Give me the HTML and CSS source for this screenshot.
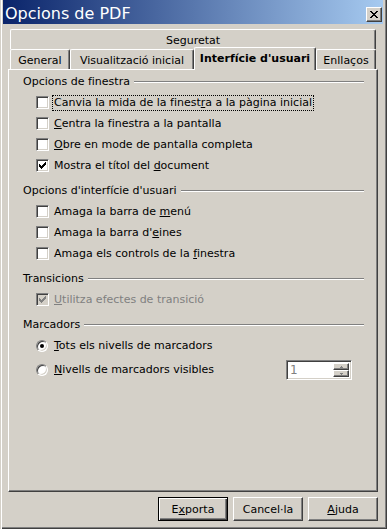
FILE: index.html
```html
<!DOCTYPE html>
<html lang="ca">
<head>
    <meta charset="UTF-8">
    <title>Opcions de PDF</title>
    <link rel="stylesheet" href="styles.css">
</head>
<body>
    <div class="window">
        <div class="titlebar">
            <span class="title">Opcions de PDF</span>
            <span class="close-btn">
                <svg width="8" height="7" viewBox="0 0 8 7" shape-rendering="crispEdges">
                    <path d="M0 0h2v1h-2z M6 0h2v1h-2z M1 1h2v1h-2z M5 1h2v1h-2z M2 2h4v1h-4z M3 3h2v1h-2z M2 4h4v1h-4z M1 5h2v1h-2z M5 5h2v1h-2z M0 6h2v1h-2z M6 6h2v1h-2z" fill="#000"/>
                </svg>
            </span>
        </div>

        <div class="dialog">
            <div class="tabs">
                <div class="tab-row">
                    <div class="tab tab-security">Seguretat</div>
                </div>
                <div class="tab-row">
                    <div class="tab tab-general">General</div>
                    <div class="tab tab-view">Visualització inicial</div>
                    <div class="tab tab-ui active">Interfície d'usuari</div>
                    <div class="tab tab-links">Enllaços</div>
                </div>
            </div>

            <div class="panel">
                <div class="group">
                    <div class="group-title"><span>Opcions de finestra</span></div>
                    <div class="rows">
                        <div class="option"><span class="check"></span><span class="label focused">Canvia la mida de la finest<u>r</u>a a la pàgina inicial</span></div>
                        <div class="option"><span class="check"></span><span class="label"><u>C</u>entra la finestra a la pantalla</span></div>
                        <div class="option"><span class="check"></span><span class="label"><u>O</u>bre en mode de pantalla completa</span></div>
                        <div class="option"><span class="check checked"><svg width="7" height="7" viewBox="0 0 7 7" shape-rendering="crispEdges"><path d="M0 2h1v3h-1z M1 3h1v3h-1z M2 4h1v3h-1z M3 3h1v3h-1z M4 2h1v3h-1z M5 1h1v3h-1z M6 0h1v3h-1z" fill="#000"/></svg></span><span class="label">Mostra el títol del <u>d</u>ocument</span></div>
                    </div>
                </div>

                <div class="group">
                    <div class="group-title"><span>Opcions d'interfície d'usuari</span></div>
                    <div class="rows">
                        <div class="option"><span class="check"></span><span class="label">Amaga la barra de <u>m</u>enú</span></div>
                        <div class="option"><span class="check"></span><span class="label">Amaga la barra d'<u>e</u>ines</span></div>
                        <div class="option"><span class="check"></span><span class="label">Amaga els controls de la <u>f</u>inestra</span></div>
                    </div>
                </div>

                <div class="group">
                    <div class="group-title"><span>Transicions</span></div>
                    <div class="rows">
                        <div class="option disabled"><span class="check checked"><svg width="7" height="7" viewBox="0 0 7 7" shape-rendering="crispEdges"><path d="M0 2h1v3h-1z M1 3h1v3h-1z M2 4h1v3h-1z M3 3h1v3h-1z M4 2h1v3h-1z M5 1h1v3h-1z M6 0h1v3h-1z" fill="#808080"/></svg></span><span class="label"><u>U</u>tilitza efectes de transició</span></div>
                    </div>
                </div>

                <div class="group">
                    <div class="group-title"><span>Marcadors</span></div>
                    <div class="rows">
                        <div class="option"><span class="radio selected"></span><span class="label"><u>T</u>ots els nivells de marcadors</span></div>
                        <div class="option spin-row">
                            <span class="radio"></span><span class="label"><u>N</u>ivells de marcadors visibles</span>
                            <div class="spinbox">
                                <span class="spin-value">1</span>
                                <div class="spin-buttons">
                                    <span class="spin-btn"><svg width="3" height="2" viewBox="0 0 3 2" shape-rendering="crispEdges"><path d="M1 0h1v1h-1z M0 1h3v1h-3z" fill="#808080"/></svg></span>
                                    <span class="spin-btn"><svg width="3" height="2" viewBox="0 0 3 2" shape-rendering="crispEdges"><path d="M0 0h3v1h-3z M1 1h1v1h-1z" fill="#808080"/></svg></span>
                                </div>
                            </div>
                        </div>
                    </div>
                </div>
            </div>

            <div class="buttons">
                <button class="btn default">E<u>x</u>porta</button>
                <button class="btn">Cancel·la</button>
                <button class="btn"><u>A</u>juda</button>
            </div>
        </div>
    </div>
</body>
</html>
```

FILE: styles.css
```css
* {
    margin: 0;
    padding: 0;
    box-sizing: border-box;
}

body {
    font-family: "DejaVu Sans", Tahoma, sans-serif;
    font-size: 11px;
    color: #000;
    background: #d4d0c8;
}

.window {
    width: 387px;
    height: 529px;
    background: #d4d0c8;
    padding: 0 4px 4px 3px;
    display: flex;
    flex-direction: column;
    box-shadow: inset 1px 0 #d4d0c8, inset 2px 0 #fff, inset -1px -1px #404040, inset -2px -2px #808080;
}

/* title bar */
.titlebar {
    height: 24px;
    display: flex;
    padding: 0 1px 0 2px;
    background: linear-gradient(to right, #0a246a, #a6caf0);
}

.title {
    color: #fff;
    font-size: 16px;
    line-height: 20px;
    padding-top: 4px;
}

.close-btn {
    margin-left: auto;
    margin-top: 7px;
    width: 16px;
    height: 15px;
    display: flex;
    align-items: center;
    justify-content: center;
    background: #d4d0c8;
    border: 1px solid;
    border-color: #fff #404040 #404040 #fff;
    box-shadow: inset -1px -1px #808080;
}

/* dialog body */
.dialog {
    flex: 1;
    display: flex;
    flex-direction: column;
    padding: 5px 5px 4px 5px;
}

.tabs {
    margin: 0 2px;
}

.tab-row {
    display: flex;
    height: 20px;
}

.tab {
    height: 20px;
    line-height: 19px;
    padding-top: 1px;
    text-align: center;
    white-space: nowrap;
    background: #d4d0c8;
    border-top: 1px solid #fff;
    border-left: 1px solid #fff;
    border-right: 1px solid #404040;
    border-radius: 2px 2px 0 0;
    box-shadow: inset -1px 0 #808080;
}

.tab-security { width: 366px; }
.tab-general { width: 60px; }
.tab-view { width: 124px; }
.tab-ui { width: 122px; }
.tab-links { width: 60px; }

.tab.active {
    position: relative;
    z-index: 1;
    height: 23px;
    margin-top: -2px;
    font-weight: bold;
}

.panel {
    flex: 1;
    border: 1px solid;
    border-color: #fff #404040 #404040 #fff;
    box-shadow: inset -1px -1px #808080;
    padding: 4px 13px 0 14px;
}

/* groups */
.group + .group {
    margin-top: 7px;
}

.group-title {
    display: flex;
    align-items: center;
    gap: 4px;
    height: 16px;
    line-height: 16px;
    white-space: nowrap;
}

.group-title::after {
    content: "";
    flex: 1;
    border-top: 1px solid #808080;
    border-bottom: 1px solid #fff;
}

.rows {
    margin-top: 2px;
}

.option {
    display: flex;
    align-items: center;
    height: 21px;
    padding-left: 13px;
    gap: 3px;
    white-space: nowrap;
}

.label {
    line-height: 14px;
    padding: 0 1px;
    border: 1px solid transparent;
}

.label.focused {
    border: 1px dotted #000;
}

.option.disabled .label {
    color: #808080;
}

.check {
    width: 13px;
    height: 13px;
    flex: none;
    display: flex;
    align-items: center;
    justify-content: center;
    background: #fff;
    border: 1px solid;
    border-color: #808080 #fff #fff #808080;
    box-shadow: inset 1px 1px #404040, inset -1px -1px #d4d0c8;
}

.option.disabled .check {
    background: #d4d0c8;
}

.radio {
    width: 12px;
    height: 12px;
    flex: none;
    margin-right: 1px;
    border-radius: 50%;
    background: #fff;
    border: 1px solid;
    border-color: #808080 #fff #fff #808080;
    box-shadow: inset 1px 1px #404040, inset -1px -1px #d4d0c8;
    display: flex;
    align-items: center;
    justify-content: center;
}

.radio.selected::after {
    content: "";
    width: 4px;
    height: 4px;
    border-radius: 50%;
    background: #000;
}

/* spin box */
.spin-row {
    height: 24px;
    margin-top: 2px;
}

.spinbox {
    margin-left: auto;
    margin-right: 12px;
    width: 66px;
    height: 20px;
    display: flex;
    background: #fff;
    border: 1px solid;
    border-color: #808080 #fff #fff #808080;
    box-shadow: inset 1px 1px #404040, inset -1px -1px #d4d0c8;
    padding: 2px;
}

.spin-value {
    flex: 1;
    color: #808080;
    font-size: 12px;
    line-height: 14px;
    padding-left: 1px;
}

.spin-buttons {
    width: 16px;
    display: flex;
    flex-direction: column;
}

.spin-btn {
    flex: 1;
    display: flex;
    align-items: center;
    justify-content: center;
    background: #d4d0c8;
    border: 1px solid;
    border-color: #fff #404040 #404040 #fff;
    box-shadow: inset -1px -1px #808080;
}

/* bottom buttons */
.buttons {
    display: flex;
    justify-content: flex-end;
    gap: 5px;
    margin-top: 5px;
}

.btn {
    width: 70px;
    height: 24px;
    font-family: inherit;
    font-size: 11px;
    color: #000;
    background: #d4d0c8;
    border: 1px solid;
    border-color: #fff #404040 #404040 #fff;
    box-shadow: inset -1px -1px #808080;
}

.btn.default {
    border-color: #000;
    box-shadow: inset 1px 1px #fff, inset -1px -1px #404040, inset -2px -2px #808080;
}
```
